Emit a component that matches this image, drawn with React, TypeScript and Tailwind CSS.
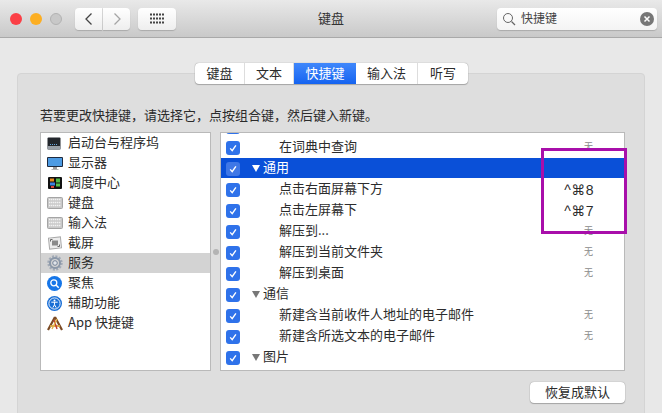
const font = { fontFamily: '"Noto Sans CJK SC", "Liberation Sans", sans-serif' };

function Kbd() {
  return (
    <svg width="16" height="12" viewBox="0 0 16 12">
      <rect x="0.5" y="0.5" width="15" height="11" rx="1" fill="#c9c9c9" stroke="#a5a5a5" />
      {[2, 5, 8].map((y) => (
        <path key={y} d={`M2 ${y + 0.5}H14`} stroke="#f2f2f2" strokeWidth="1.4" strokeDasharray="1.4 .6" />
      ))}
    </svg>
  );
}

const icons: Record<string, React.ReactNode> = {
  launch: (
    <svg width="15" height="13" viewBox="0 0 15 13">
      <rect x="0.5" y="0.5" width="13" height="12" rx="1" fill="#23262c" />
      <rect x="0.5" y="9" width="13" height="3.5" fill="#9aa0a8" />
      <path d="M3 7.5H11" stroke="#6aa7dc" strokeDasharray="1 1" />
    </svg>
  ),
  display: (
    <svg width="16" height="13" viewBox="0 0 16 13">
      <rect x="0" y="0" width="16" height="10" rx="1" fill="#1d2a3f" />
      <rect x="1" y="1" width="14" height="8" fill="#4d9be3" />
      <rect x="6" y="10" width="4" height="2" fill="#9a9a9a" />
      <rect x="4.5" y="12" width="7" height="1" fill="#b5b5b5" />
    </svg>
  ),
  mission: (
    <svg width="14" height="12" viewBox="0 0 14 12">
      <rect width="14" height="12" rx="1" fill="#111" />
      <rect x="2" y="1.5" width="4" height="3" fill="#e68a1f" />
      <rect x="8" y="1.5" width="4" height="4" fill="#4cb848" />
      <rect x="2" y="5.5" width="5" height="3" fill="#3b82e0" />
      <rect x="8" y="6.5" width="4" height="3" fill="#56c24c" />
      <rect x="3" y="9" width="3" height="2" fill="#d9483b" />
    </svg>
  ),
  kbd: <Kbd />,
  shot: (
    <svg width="14" height="14" viewBox="0 0 14 14">
      <rect x="1" y="1.5" width="12" height="11" fill="#ececec" stroke="#a9a9a9" transform="rotate(-6 7 7)" />
      <rect x="4" y="4.5" width="6" height="5" fill="#8a8a8a" />
      <path d="M2.5 3.5h2M2.5 3.5v2M11.5 10.5h-2M11.5 10.5v-2" stroke="#666" />
    </svg>
  ),
  gear: (
    <svg width="16" height="16" viewBox="0 0 16 16">
      <circle cx="8" cy="8" r="6" fill="none" stroke="#8290a3" strokeWidth="3.4" strokeDasharray="1.9 1.2" opacity=".6" />
      <circle cx="8" cy="8" r="5" fill="none" stroke="#8a97a8" strokeWidth="2" />
      <circle cx="8" cy="8" r="2.3" fill="#e1e5ea" stroke="#76849a" />
    </svg>
  ),
  spot: (
    <svg width="15" height="15" viewBox="0 0 15 15">
      <circle cx="7.5" cy="7.5" r="7.5" fill="#1676e8" />
      <circle cx="6.8" cy="6.8" r="3" fill="none" stroke="#fff" strokeWidth="1.3" />
      <path d="M9 9l2.7 2.7" stroke="#fff" strokeWidth="1.5" />
    </svg>
  ),
  access: (
    <svg width="15" height="15" viewBox="0 0 15 15">
      <circle cx="7.5" cy="7.5" r="7.5" fill="#1a6fd6" />
      <circle cx="7.5" cy="7.5" r="5.6" fill="none" stroke="#fff" strokeWidth=".9" />
      <circle cx="7.5" cy="4.6" r="1" fill="#fff" />
      <path d="M4.3 6.2h6.4M7.5 6.2v2.6M7.5 8.8l-1.7 2.8M7.5 8.8l1.7 2.8" stroke="#fff" strokeWidth="1" fill="none" />
    </svg>
  ),
  app: (
    <svg width="16" height="15" viewBox="0 0 16 15">
      <path d="M8 1L1 14M8 1l7 13" stroke="#7b4a24" strokeWidth="2.2" fill="none" />
      <path d="M3 10h10" stroke="#d9a441" strokeWidth="1.8" />
      <path d="M7 4l3 9" stroke="#c33b2e" strokeWidth="1.4" />
      <path d="M10 3L5 13" stroke="#e3b54a" strokeWidth="1.4" />
    </svg>
  ),
};

const sideItems = [
  ["launch", "启动台与程序坞"],
  ["display", "显示器"],
  ["mission", "调度中心"],
  ["kbd", "键盘"],
  ["kbd", "输入法"],
  ["shot", "截屏"],
  ["gear", "服务"],
  ["spot", "聚焦"],
  ["access", "辅助功能"],
  ["app", "App 快捷键"],
];

type Row = { label: string; group?: boolean; selected?: boolean; key?: string; none?: boolean };
const rows: Row[] = [
  { label: "在词典中查询", none: true },
  { label: "通用", group: true, selected: true },
  { label: "点击右面屏幕下方", key: "^⌘8" },
  { label: "点击左屏幕下", key: "^⌘7" },
  { label: "解压到...", none: true },
  { label: "解压到当前文件夹", none: true },
  { label: "解压到桌面", none: true },
  { label: "通信", group: true },
  { label: "新建含当前收件人地址的电子邮件", none: true },
  { label: "新建含所选文本的电子邮件", none: true },
  { label: "图片", group: true },
];

function Check({ light }: { light?: boolean }) {
  return (
    <span className={`mt-[2px] flex h-[14px] w-[14px] shrink-0 items-center justify-center rounded-[3px] ${light ? "bg-[#3f77e6]" : "bg-[#2f72ea]"}`}>
      <svg width="10" height="10" viewBox="0 0 10 10">
        <path d="M2.2 5.4L4.2 7.6L7.9 2.3" fill="none" stroke="#fff" strokeWidth="1.4" />
      </svg>
    </span>
  );
}

export default function App() {
  const tabs = ["键盘", "文本", "快捷键", "输入法", "听写"];
  const widths = ["w-[50px]", "w-[49px]", "w-[62px]", "w-[62px]", "w-[50px]"];
  return (
    <div className="relative flex h-[413px] w-[662px] flex-col overflow-hidden bg-[#e8e8e8] text-[#262626]" style={font}>
      <header className="relative flex h-[38px] shrink-0 items-center border-b border-[#a9a9a9] bg-gradient-to-b from-[#e9e9e9] to-[#c9c9c9] pl-[10px]">
        <span className="h-3 w-3 rounded-full bg-[#fb3f46]" />
        <span className="ml-2 h-3 w-3 rounded-full bg-[#fcae22]" />
        <span className="ml-2 h-3 w-3 rounded-full border border-[#b2b2b2] bg-[#c8c8c8]" />
        <div className="ml-[13px] flex gap-px">
          <div className="flex h-[22px] w-[27px] items-center justify-center rounded-l-[4px] bg-gradient-to-b from-white to-[#eeeeee] shadow-[0_1px_1px_#aaa]">
            <svg width="10" height="14" viewBox="0 0 10 14"><path d="M7.5 1.500L2 7l5.500 5.500" fill="none" stroke="#444" strokeWidth="1.300" /></svg>
          </div>
          <div className="flex h-[22px] w-[27px] items-center justify-center rounded-r-[4px] bg-gradient-to-b from-white to-[#eeeeee] shadow-[0_1px_1px_#aaa]">
            <svg width="10" height="14" viewBox="0 0 10 14"><path d="M2.500 1.500L8 7l-5.500 5.500" fill="none" stroke="#a5a5a5" strokeWidth="1.300" /></svg>
          </div>
        </div>
        <div className="ml-2 flex h-[22px] w-[38px] items-center justify-center rounded-[4px] bg-gradient-to-b from-white to-[#eeeeee] shadow-[0_1px_1px_#aaa]">
          <svg width="16" height="11" viewBox="0 0 16 11" fill="#444">
            {[0, 4, 8].map((y) => [0, 3, 6, 9, 12].map((x) => <rect key={`${x}-${y}`} x={x + 1} y={y + 0.5} width="2" height="2" />))}
          </svg>
        </div>
        <span className="ml-[137px] w-[36px] pb-[2px] text-center text-[13px] leading-[18px] text-[#333]">键盘</span>
        <div className="ml-[148px] flex h-[22px] w-[160px] items-center rounded-[4px] bg-gradient-to-b from-white to-[#f4f4f4] pl-[5px] pr-[3px] shadow-[0_1px_1px_#aaa]">
          <svg width="14" height="14" viewBox="0 0 14 14"><circle cx="6" cy="6" r="4.500" fill="none" stroke="#666" /><path d="M9.500 9.500L13 13" stroke="#666" strokeWidth="1.200" /></svg>
          <span className="ml-[5px] pb-[2px] text-[12px] leading-[18px] text-[#444]">快捷键</span>
          <span className="ml-auto flex h-[14px] w-[14px] items-center justify-center rounded-full bg-[#777]">
            <svg width="8" height="8" viewBox="0 0 8 8"><path d="M1.500 1.500l5 5M6.500 1.500l-5 5" stroke="#fff" strokeWidth="1.500" /></svg>
          </span>
        </div>
      </header>

      <main className="flex min-h-0 flex-1 flex-col pt-[35px] pl-[17px] pr-[17px]">
        <section className="relative flex h-[360px] shrink-0 flex-col rounded-t-[4px] border border-[#d4d4d4] bg-[#dedede] pl-[22px] pr-[19px] pt-[32px]">
          <div className="absolute left-[177px] top-[-11px] flex h-[21px] overflow-hidden rounded-[4px] bg-white shadow-[0_0_1px_#777,0_1px_1px_#aaa]">
            {tabs.map((t, i) => (
              <span
                key={t}
                className={`flex ${widths[i]} items-center justify-center pb-[2px] text-[13px] leading-[18px] ${
                  i === 2 ? "bg-gradient-to-b from-[#3f87fb] to-[#1463f0] text-white" : "border-r border-[#dddddd] text-[#2b2b2b] last:border-r-0"
                }`}
              >
                {t}
              </span>
            ))}
          </div>

          <p className="text-[13px] leading-[18px] text-[#2b2b2b]">若要更改快捷键，请选择它，点按组合键，然后键入新键。</p>

          <div className="mt-[8px] flex h-[239px] items-stretch">
            <ul className="w-[171px] shrink-0 border border-[#b9b9b9] bg-white">
              {sideItems.map(([icon, label], i) => (
                <li key={label} className={`flex h-[20px] items-center ${i === 6 ? "bg-[#d3d3d3]" : ""}`}>
                  <span className="flex w-[27px] shrink-0 justify-center">{icons[icon]}</span>
                  <span className="pb-[2px] text-[13px] leading-[18px] text-[#2c2c2c]">{label}</span>
                </li>
              ))}
            </ul>
            <div className="flex w-[9px] shrink-0 items-center justify-center">
              <span className="h-[6px] w-[6px] rounded-full bg-[#b4b4b4]" />
            </div>
            <div className="flex-1 overflow-hidden border border-[#b9b9b9] bg-white">
              <div className="-mt-[17px] mb-px flex h-[20px] items-center pl-[5px]"><Check /></div>
              {rows.map((r) => (
                <div key={r.label} className={`mb-px flex h-[20px] items-center pl-[5px] ${r.selected ? "bg-[#0a50d8]" : ""}`}>
                  <Check light={r.selected} />
                  {r.group ? (
                    <span className={`ml-[12px] flex items-center pb-[2px] text-[13px] leading-[18px] ${r.selected ? "text-white" : "text-[#2c2c2c]"}`}>
                      <svg width="8" height="7" viewBox="0 0 8 7" className="mr-[3px] mt-[2px]">
                        <path d="M0 0H8L4 7Z" fill={r.selected ? "#fff" : "#777"} />
                      </svg>
                      {r.label}
                    </span>
                  ) : (
                    <span className="ml-[39px] pb-[2px] text-[13px] leading-[18px] text-[#2c2c2c]">{r.label}</span>
                  )}
                  {r.none && <span className="ml-auto mr-[31px] text-[9px] leading-[12px] text-[#8a8a8a]">无</span>}
                  {r.key && <span className="ml-auto mr-[30px] mt-[1px] text-[14px] leading-[18px] tracking-[0.5px] text-[#2c2c2c]" style={{ fontFamily: '"Liberation Sans", "DejaVu Sans", sans-serif' }}>{r.key}</span>}
                </div>
              ))}
            </div>
          </div>

          <div className="mt-[11px] flex justify-end">
            <button className="flex h-[21px] w-[95px] items-center justify-center rounded-[4px] bg-white pb-[2px] text-[13px] leading-[18px] text-[#2b2b2b] shadow-[0_0_1px_#777,0_1px_1px_#aaa]">恢复成默认</button>
          </div>
        </section>
      </main>

      <div className="absolute left-[541px] top-[148px] h-[86px] w-[86px] border-[3px] border-[#a80faa]" />
    </div>
  );
}
